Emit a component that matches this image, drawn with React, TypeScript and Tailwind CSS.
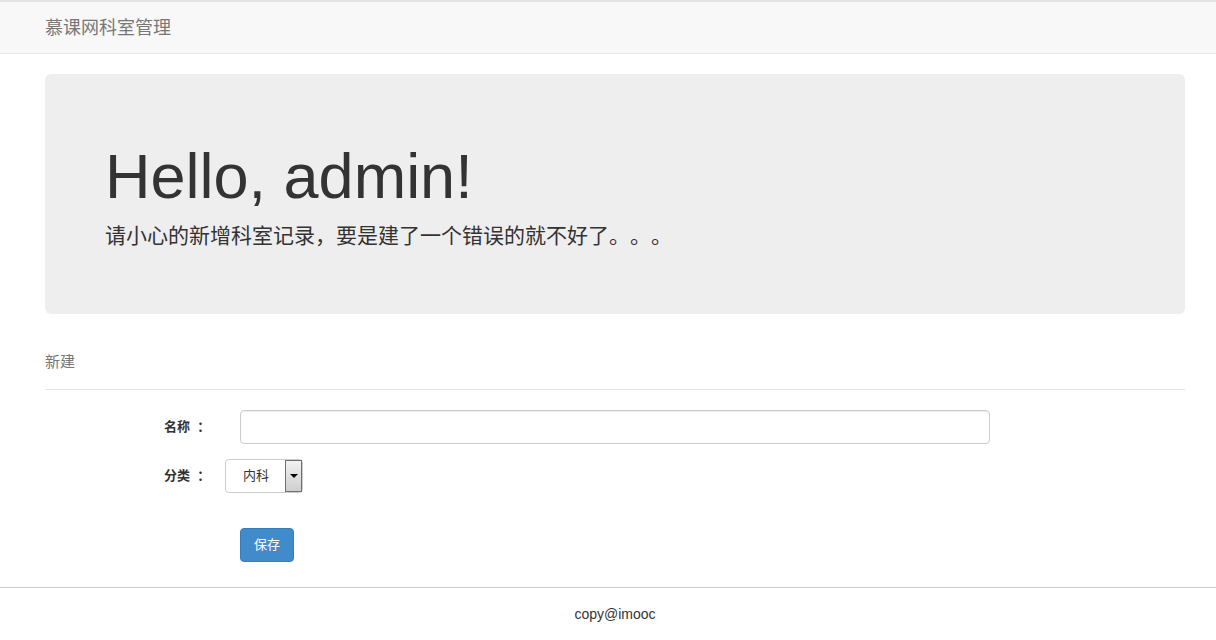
import { useState } from "react";

const font = "font-['Liberation_Sans','Noto_Sans_CJK_SC',sans-serif]";

export default function App() {
  const [name, setName] = useState("");
  const [cat, setCat] = useState("内科");

  return (
    <div className={`${font} [text-spacing-trim:space-all] min-h-[640px] bg-white text-[14px] text-[#333]`}>
      <div className="border-t-2 border-[#e3e3e3] border-b border-b-[#e7e7e7] bg-[#f8f8f8] h-[54px] flex items-center">
        <span className="ml-[45px] text-[18px] text-[#777] leading-[20px]">慕课网科室管理</span>
      </div>

      <div className="ml-[45px] w-[1140px] pt-[20px]">
        <div className="bg-[#eeeeee] rounded-[6px] h-[240px] pl-[60px] pt-[68px]">
          <h1 className="text-[63px] leading-[69px] text-[#333]">Hello, admin!</h1>
          <p className="mt-[10px] text-[21px] leading-[30px] text-[#333]">
            请小心的新增科室记录，要是建了一个错误的就不好了。。。
          </p>
        </div>

        <div className="mt-[30px] pt-[8px] pb-[17px] border-b border-[#e5e5e5] text-[15px] text-[#777] leading-[20px]">
          新建
        </div>

        <form className="pt-[20px]" onSubmit={(e) => e.preventDefault()}>
          <div className="flex items-center">
            <label className="ml-[119px] w-[76px] text-[13px] font-bold whitespace-pre">名称  ：</label>
            <input
              value={name}
              onChange={(e) => setName(e.target.value)}
              className="w-[750px] h-[34px] border border-[#ccc] rounded-[4px] px-3 outline-none shadow-[inset_0_1px_1px_rgba(0,0,0,0.075)]"
            />
          </div>

          <div className="flex items-center mt-[15px]">
            <label className="ml-[119px] w-[61px] text-[13px] font-bold whitespace-pre">分类  ：</label>
            <div className="relative w-[78px] h-[34px] border border-[#ccc] rounded-[4px] flex items-center bg-white">
              <span className="pl-[17px] text-[13px] text-[#333]">{cat}</span>
              <select
                value={cat}
                onChange={(e) => setCat(e.target.value)}
                className="absolute inset-0 opacity-0"
              >
                <option>内科</option>
                <option>外科</option>
              </select>
              <div className="absolute right-0 top-0 bottom-0 w-[17px] border border-[#707070] bg-gradient-to-b from-[#f2f2f2] to-[#cfcfcf] flex items-center justify-center pointer-events-none">
                <span className="w-0 h-0 border-l-[4px] border-r-[4px] border-t-[4px] border-l-transparent border-r-transparent border-t-black" />
              </div>
            </div>
          </div>

          <div className="mt-[35px] ml-[195px]">
            <button className="w-[54px] h-[34px] bg-[#428bca] border border-[#357ebd] rounded-[4px] text-white text-[13px]">
              保存
            </button>
          </div>
        </form>
      </div>

      <div className="mt-[25px] border-t border-[#cccccc]">
        <div className="ml-[45px] w-[1140px] h-[52px] flex items-center justify-center text-[14px] text-[#333]">
          copy@imooc
        </div>
      </div>
    </div>
  );
}
